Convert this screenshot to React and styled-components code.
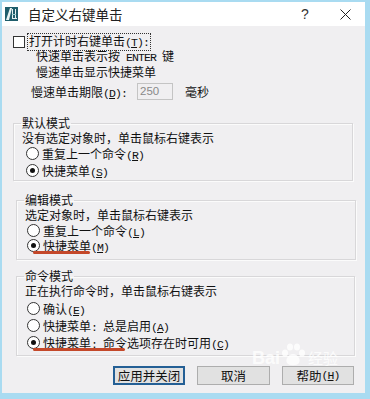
import React from "react";
import styled, { createGlobalStyle } from "styled-components";

const GlobalStyle = createGlobalStyle`
    body {
        margin: 0;
        background: #a9dbf1;
    }
`;

const Window = styled.div`
    position: relative;
    width: 370px;
    height: 399px;
    box-sizing: border-box;
    border-style: solid;
    border-color: #a9dbf1;
    border-width: 2px 5px 6px 2px;
    background: #f0eff1;
    font-family: "Noto Sans CJK SC", "Noto Sans", sans-serif;
    font-size: 12px;
    color: #111;
    display: flex;
    flex-direction: column;
    overflow: hidden;
`;

const TitleBar = styled.div`
    height: 24px;
    background: #fff;
    display: flex;
    align-items: center;
    padding-left: 3px;
`;

const Title = styled.div`
    margin-left: 10px;
    font-size: 13.5px;
    color: #222;
    flex: 1;
`;

const TitleButton = styled.div`
    width: ${(p) => p.$w}px;
    margin-right: ${(p) => p.$mr || 0}px;
    font-family: "Liberation Sans", sans-serif;
    font-size: 14px;
    color: #333;
    display: flex;
    justify-content: center;
`;

const Body = styled.div`
    padding: 9px 11px 0 11px;
    display: flex;
    flex-direction: column;
`;

const CheckRow = styled.div`
    display: flex;
    align-items: center;
    height: 14px;
    gap: 3px;
`;

const CheckBox = styled.span`
    width: 10px;
    height: 10px;
    border: 1px solid #333;
    background: #fff;
`;

const FocusLabel = styled.span`
    outline: 1px dotted #333;
    padding: 0 1px;
    line-height: 14px;
`;

const Line = styled.div`
    line-height: 14px;
    margin-left: ${(p) => p.$indent || 0}px;
    white-space: nowrap;
`;

/* half-width latin text, 6px per char like the dialog's bitmap font */
const Ascii = styled.span`
    font-family: "Liberation Mono", monospace;
    font-size: 11.5px;
    letter-spacing: -0.9px;
    white-space: pre;
`;

const Key = styled.u`
    text-underline-offset: 1px;
`;

const LimitRow = styled.div`
    display: flex;
    align-items: center;
    height: 17px;
    margin: 4px 0 0 18px;
`;

const LimitLabel = styled.span`
    width: 106px;
`;

const NumberBox = styled.div`
    width: 32px;
    height: 15px;
    border: 1px solid #c4c4c4;
    background: #f0eff1;
    color: #8a8a8a;
    font-family: "Liberation Sans", sans-serif;
    font-size: 11.5px;
    line-height: 15px;
    padding-left: 2px;
`;

const Unit = styled.span`
    margin-left: 12px;
`;

const Group = styled.fieldset`
    margin: ${(p) => p.$top}px 0 0 ${(p) => p.$left}px;
    width: ${(p) => p.$width}px;
    box-sizing: border-box;
    min-inline-size: 0;
    padding: 0 8px ${(p) => p.$bottom}px 8px;
    border: 1px solid #d8d7d9;
    box-shadow: inset 1px 1px 0 #fbfbfb, 1px 1px 0 #fbfbfb;
    display: flex;
    flex-direction: column;
`;

const Legend = styled.legend`
    padding: 0 1px;
    margin-left: -1px;
    line-height: 14px;
`;

const GroupText = styled.div`
    line-height: 15px;
`;

const RadioRow = styled.div`
    position: relative;
    display: flex;
    align-items: center;
    height: ${(p) => p.$h}px;
    margin-top: ${(p) => p.$mt || 0}px;
    margin-left: ${(p) => p.$ml || 3}px;
    gap: 3px;
`;

const RadioCircle = styled.span`
    width: 11px;
    height: 11px;
    border: 1px solid #333;
    border-radius: 50%;
    background: #fff;
    display: flex;
    align-items: center;
    justify-content: center;
    &::after {
        content: "";
        width: 5px;
        height: 5px;
        border-radius: 50%;
        background: ${(p) => (p.$on ? "#111" : "transparent")};
    }
`;

const Mark = styled.span`
    position: absolute;
    left: 6px;
    top: ${(p) => p.$top}px;
    width: ${(p) => p.$w}px;
    height: 3px;
    border-radius: 2px;
    background: #c4482a;
`;

const Buttons = styled.div`
    display: flex;
    justify-content: flex-end;
    gap: 12px;
    margin-top: 10px;
`;

const Button = styled.div`
    width: ${(p) => p.$w}px;
    height: 19px;
    box-sizing: border-box;
    border: ${(p) => (p.$default ? "2px solid #245f95" : "1px solid #adadad")};
    background: #e1e1e1;
    display: flex;
    align-items: center;
    justify-content: center;
    font-size: 12.5px;
`;

const Watermark = styled.div`
    position: absolute;
    left: 250px;
    top: 341px;
    display: flex;
    align-items: flex-end;
    color: rgba(255, 255, 255, 0.8);
    pointer-events: none;
`;

const WmLatin = styled.span`
    font-family: "Liberation Sans", sans-serif;
    font-weight: bold;
    font-size: 18px;
    line-height: 18px;
`;

const WmCjk = styled.span`
    font-size: 15px;
    line-height: 18px;
    margin-left: 2px;
`;

const AppIcon = () => (
    <svg width="13" height="14" viewBox="0 0 13 14">
        <rect x="0" y="0" width="13" height="14" fill="#1f5d6b" />
        <path d="M1 13 L5 1 L7 1 L4 13 Z" fill="#e8f2f2" />
        <rect x="7" y="2" width="1" height="10" fill="#e8f2f2" />
        <rect x="10" y="2" width="1" height="10" fill="#e8f2f2" />
        <rect x="7" y="11" width="5" height="1" fill="#e8f2f2" />
        <rect x="7" y="7" width="4" height="1" fill="#9cc" />
    </svg>
);

const CloseIcon = () => (
    <svg width="11" height="11" viewBox="0 0 11 11">
        <path d="M0.5 0.5 L10.5 10.5 M10.5 0.5 L0.5 10.5" stroke="#222" strokeWidth="1" />
    </svg>
);

const Paw = () => (
    <svg width="26" height="24" viewBox="0 0 26 24">
        <g fill="rgba(255,255,255,0.8)">
            <ellipse cx="5" cy="10" rx="3" ry="3.5" />
            <ellipse cx="10" cy="4" rx="3" ry="3.5" />
            <ellipse cx="17" cy="4" rx="3" ry="3.5" />
            <ellipse cx="22" cy="10" rx="3" ry="3.5" />
            <path d="M13 11 C8 11 5 17 7 20 C9 23 17 23 19 20 C21 17 18 11 13 11 Z" />
        </g>
    </svg>
);

// "(X)" style access key in half-width letters
const Access = ({ k, colon }) => (
    <Ascii>
        (<Key>{k}</Key>){colon ? ":" : ""}
    </Ascii>
);

const Radio = ({ on, h, mt, ml, children, mark }) => (
    <RadioRow $h={h} $mt={mt} $ml={ml}>
        <RadioCircle $on={on} />
        <span>{children}</span>
        {mark && <Mark $top={mark.top} $w={mark.w} />}
    </RadioRow>
);

const App = () => {
    return (
        <>
            <GlobalStyle />
            <Window>
                <TitleBar>
                    <AppIcon />
                    <Title>自定义右键单击</Title>
                    <TitleButton $w={28}>?</TitleButton>
                    <TitleButton $w={18} $mr={11} style={{ marginLeft: 17 }}>
                        <CloseIcon />
                    </TitleButton>
                </TitleBar>
                <Body>
                    <CheckRow>
                        <CheckBox />
                        <FocusLabel>
                            打开计时右键单击<Access k="T" colon />
                        </FocusLabel>
                    </CheckRow>
                    <Line $indent={23}>
                        快速单击表示按<Ascii> ENTER </Ascii>键
                    </Line>
                    <Line $indent={23}>慢速单击显示快捷菜单</Line>
                    <LimitRow>
                        <LimitLabel>
                            慢速单击期限<Access k="D" colon />
                        </LimitLabel>
                        <NumberBox>250</NumberBox>
                        <Unit>毫秒</Unit>
                    </LimitRow>

                    <Group $top={16} $left={0} $width={340} $bottom={1}>
                        <Legend>默认模式</Legend>
                        <GroupText>没有选定对象时，单击鼠标右键表示</GroupText>
                        <Radio h={17} ml={4}>
                            重复上一个命令<Access k="R" />
                        </Radio>
                        <Radio h={17} ml={4} on>
                            快捷菜单<Access k="S" />
                        </Radio>
                    </Group>

                    <Group $top={12} $left={3} $width={340} $bottom={6}>
                        <Legend>编辑模式</Legend>
                        <GroupText>选定对象时，单击鼠标右键表示</GroupText>
                        <Radio h={15} mt={1} ml={2}>
                            重复上一个命令<Access k="L" />
                        </Radio>
                        <Radio h={15} ml={2} on mark={{ top: 13, w: 57 }}>
                            快捷菜单<Access k="M" />
                        </Radio>
                    </Group>

                    <Group $top={9} $left={3} $width={339} $bottom={4}>
                        <Legend>命令模式</Legend>
                        <GroupText>正在执行命令时，单击鼠标右键表示</GroupText>
                        <Radio h={17} mt={2} ml={2}>
                            确认<Access k="E" />
                        </Radio>
                        <Radio h={17} ml={2}>
                            快捷菜单<Ascii>: </Ascii>总是启用<Access k="A" />
                        </Radio>
                        <Radio h={17} ml={2} on mark={{ top: 14, w: 92 }}>
                            快捷菜单<Ascii>: </Ascii>命令选项存在时可用<Access k="C" />
                        </Radio>
                    </Group>

                    <Buttons>
                        <Button $w={72} $default>
                            应用并关闭
                        </Button>
                        <Button $w={73}>取消</Button>
                        <Button $w={72}>
                            帮助<Access k="H" />
                        </Button>
                    </Buttons>
                </Body>
                <Watermark>
                    <WmLatin>Bai</WmLatin>
                    <Paw />
                    <WmCjk>经验</WmCjk>
                </Watermark>
            </Window>
        </>
    );
};

export default App;
